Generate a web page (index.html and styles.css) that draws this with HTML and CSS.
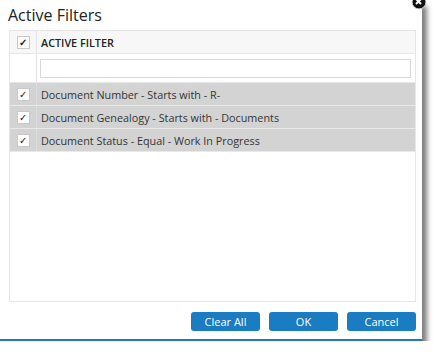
FILE: index.html
```html
<!DOCTYPE html>
<html lang="en">
<head>
    <meta charset="UTF-8">
    <title>Active Filters</title>
    <link rel="stylesheet" href="styles.css">
</head>
<body>
    <div class="dialog">
        <div class="close-btn">
            <svg width="16" height="16" viewBox="0 0 16 16">
                <circle cx="8" cy="8" r="7" fill="#111" stroke="#ddd" stroke-width="1"/>
                <path d="M5 10 L10 5 M5 5 L10 10" stroke="#fff" stroke-width="2"/>
            </svg>
        </div>

        <h1 class="title">Active Filters</h1>

        <div class="grid">
            <div class="row header-row">
                <div class="check-cell"><span class="check-box">&#10003;</span></div>
                <div class="text-cell">ACTIVE FILTER</div>
            </div>
            <div class="row filter-row">
                <div class="check-cell"></div>
                <div class="text-cell"><input type="text" class="filter-input"></div>
            </div>
            <div class="row data-row">
                <div class="check-cell"><span class="check-box">&#10003;</span></div>
                <div class="text-cell">Document Number - Starts with - R-</div>
            </div>
            <div class="row data-row">
                <div class="check-cell"><span class="check-box">&#10003;</span></div>
                <div class="text-cell">Document Genealogy - Starts with - Documents</div>
            </div>
            <div class="row data-row">
                <div class="check-cell"><span class="check-box">&#10003;</span></div>
                <div class="text-cell">Document Status - Equal - Work In Progress</div>
            </div>
        </div>

        <div class="buttons">
            <button>Clear All</button>
            <button>OK</button>
            <button>Cancel</button>
        </div>
    </div>
</body>
</html>
```

FILE: styles.css
```css
body {
    margin: 0;
    padding: 0;
    background-color: #fff;
    font-family: "Open Sans", Arial, sans-serif;
    color: #333;
}

.dialog {
    position: relative;
    width: 422px;
    height: 339px;
    background-color: #fff;
    border-bottom: 2px solid #1d7bbf;
    box-shadow: 5px 6px 5px rgba(0, 0, 0, 0.5);
    display: flex;
    flex-direction: column;
}

.close-btn {
    position: absolute;
    top: -7px;
    right: -5px;
}

.title {
    margin: 0;
    height: 30px;
    padding-left: 8px;
    font-size: 16px;
    font-weight: normal;
    line-height: 30px;
    color: #222;
}

.grid {
    margin: 0 6px 0 9px;
    height: 270px;
    border: 1px solid #e6e6e6;
}

.row {
    display: grid;
    grid-template-columns: 27px 1fr;
    border-bottom: 1px solid #e6e6e6;
    font-size: 10.8px;
}

.check-cell {
    display: flex;
    align-items: center;
    justify-content: center;
    border-right: 1px solid #e6e6e6;
}

.text-cell {
    display: flex;
    align-items: center;
    padding-left: 4px;
}

.check-box {
    width: 11px;
    height: 11px;
    border: 1px solid #c8c8c8;
    background-color: #fff;
    font-size: 10px;
    line-height: 11px;
    text-align: center;
    color: #222;
}

.header-row {
    height: 22px;
    background-color: #f7f7f7;
    font-weight: 600;
    color: #222;
}

.filter-row {
    height: 28px;
    background-color: #fff;
}

.filter-input {
    width: 371px;
    height: 19px;
    margin: 0 0 0 -1px;
    padding: 0;
    border: 1px solid #d8d8d8;
    box-sizing: border-box;
}

.data-row {
    height: 22px;
    background-color: #d3d3d3;
    border-bottom: 1px solid #e9e9e9;
    color: #333;
}

.data-row .check-cell {
    border-right-color: #dcdcdc;
}

.buttons {
    display: flex;
    justify-content: flex-end;
    gap: 9px;
    margin: 10px 6px 0 0;
}

button {
    width: 69px;
    height: 19px;
    padding: 0;
    background-color: #1a7cc1;
    color: #fff;
    border: none;
    border-radius: 3px;
    font-family: "Open Sans", Arial, sans-serif;
    font-size: 11px;
    cursor: pointer;
}
```
